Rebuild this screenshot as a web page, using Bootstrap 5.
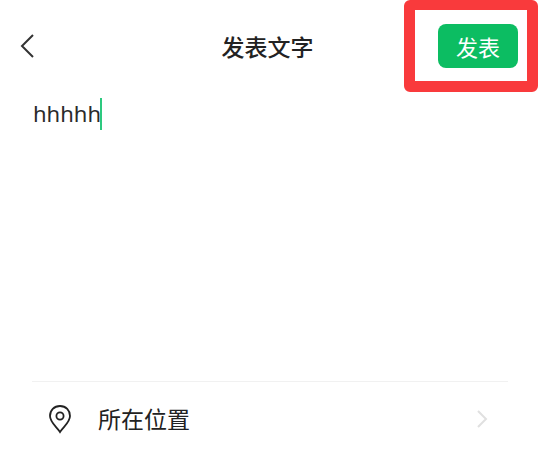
<!DOCTYPE html>
<html lang="zh"><head><meta charset="utf-8">
<link href="https://cdn.jsdelivr.net/npm/bootstrap@5.3.0/dist/css/bootstrap.min.css" rel="stylesheet">
<style>
html,body{height:452px;overflow:hidden;background:#fff;}
body{font-family:"Noto Sans CJK SC","Noto Sans",sans-serif;color:#222;}
.topbar{height:92px;padding-left:20px;}
.topbar-title{font-size:23px;font-weight:500;left:0;width:535px;top:28px;line-height:36px;text-align:center;position:absolute;}
.send-frame{width:134px;height:92px;margin-left:auto;margin-right:2px;border:11px solid #f93a3c;border-top-width:10px;border-radius:6px;padding-right:9px;}
.send-btn{background:#0cbd62;color:#fff;border:0;width:80px;height:44px;font-size:22px;border-radius:8px;padding:0;line-height:44px;}
.entry{font-family:"Noto Sans",sans-serif;font-size:22px;line-height:32px;padding-left:33px;padding-top:5px;height:289px;color:#2a2a2a;}
.caret-bar{display:inline-block;width:2px;height:32px;background:#2dc97f;vertical-align:-8px;margin-left:-1px;}
.loc-row{margin:0 32px;border-top:1px solid #f1f1f1;height:71px;padding-left:16px;padding-top:3px;}
.loc-text{font-size:23px;margin-left:26px;}
</style></head><body>
<div class="position-relative">
<div class="topbar d-flex align-items-center">
<svg width="14" height="24" viewBox="0 0 14 24" fill="none" stroke="#333" stroke-width="2"><path d="M13 1 2 12l11 11"/></svg>
<div class="topbar-title">发表文字</div>
<div class="send-frame d-flex align-items-center justify-content-end"><button class="send-btn btn">发表</button></div>
</div>
<div class="entry">hhhhh<span class="caret-bar"></span></div>
<div class="loc-row d-flex align-items-center">
<svg width="24" height="30" viewBox="0 0 24 30" fill="none" stroke="#222" stroke-width="1.800"><path d="M12 2C6 2 2 6.500 2 12c0 6.500 7 11 10 16 3-5 10-9.500 10-16 0-5.500-4-10-10-10z"/><circle cx="12" cy="12" r="3.600"/></svg>
<span class="loc-text">所在位置</span>
<svg class="ms-auto" style="margin-right:20px" width="12" height="20" viewBox="0 0 12 20" fill="none" stroke="#e0e0e0" stroke-width="2"><path d="M2 2l8 8-8 8"/></svg>
</div>
</div>
</body></html>
